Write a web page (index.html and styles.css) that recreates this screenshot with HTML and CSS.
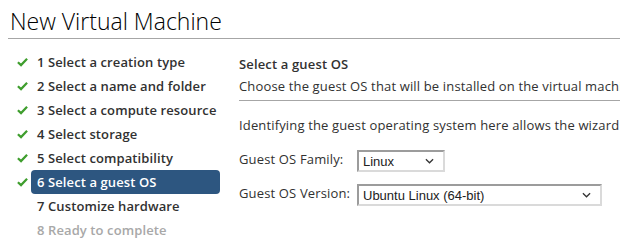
FILE: index.html
```html
<!doctype html>
<html>
  <head>
    <link rel="stylesheet" href="styles.css">
    <title>New Virtual Machine</title>
  </head>
  <body>
    <div id="page-wrapper">
      <h1 class="title">New Virtual Machine</h1>
      <div class="wizard">
        <ul class="steps">
          <li class="step done"><svg class="check" viewBox="0 0 12 10"><path d="M1 5.2 L4.4 8.4 L11 1.4"/></svg><span class="step-label">1 Select a creation type</span></li>
          <li class="step done"><svg class="check" viewBox="0 0 12 10"><path d="M1 5.2 L4.4 8.4 L11 1.4"/></svg><span class="step-label">2 Select a name and folder</span></li>
          <li class="step done"><svg class="check" viewBox="0 0 12 10"><path d="M1 5.2 L4.4 8.4 L11 1.4"/></svg><span class="step-label">3 Select a compute resource</span></li>
          <li class="step done"><svg class="check" viewBox="0 0 12 10"><path d="M1 5.2 L4.4 8.4 L11 1.4"/></svg><span class="step-label">4 Select storage</span></li>
          <li class="step done"><svg class="check" viewBox="0 0 12 10"><path d="M1 5.2 L4.4 8.4 L11 1.4"/></svg><span class="step-label">5 Select compatibility</span></li>
          <li class="step done active"><svg class="check" viewBox="0 0 12 10"><path d="M1 5.2 L4.4 8.4 L11 1.4"/></svg><span class="step-label">6 Select a guest OS</span></li>
          <li class="step"><span class="check"></span><span class="step-label">7 Customize hardware</span></li>
          <li class="step disabled"><span class="check"></span><span class="step-label">8 Ready to complete</span></li>
        </ul>
        <div class="content">
          <div class="content-header">
            <div class="content-title">Select a guest OS</div>
            <div class="content-desc">Choose the guest OS that will be installed on the virtual machine</div>
          </div>
          <p class="intro">Identifying the guest operating system here allows the wizard to provide the appropriate defaults for the operating system installation.</p>
          <div class="form">
            <span class="form-label">Guest OS Family:</span>
            <div class="select small"><span>Linux</span><svg class="chevron" viewBox="0 0 10 6"><path d="M1 1 L5 5 L9 1"/></svg></div>
            <span class="form-label">Guest OS Version:</span>
            <div class="select wide"><span>Ubuntu Linux (64-bit)</span><svg class="chevron" viewBox="0 0 10 6"><path d="M1 1 L5 5 L9 1"/></svg></div>
          </div>
        </div>
      </div>
    </div>
  </body>
</html>
```

FILE: styles.css
```css
body {
  margin: 0;
  font-family: "Open Sans", sans-serif;
  color: #313131;
  background: white;
  overflow: hidden;
}

#page-wrapper {
  width: 620px;
  overflow: hidden;
}

.title {
  margin: 0 0 0 8px;
  padding: 7px 0 0 2px;
  height: 31px;
  font-weight: 300;
  font-size: 23px;
  line-height: 28px;
  color: #000;
  border-bottom: 1px solid #a6a6a6;
  white-space: nowrap;
}

.wizard {
  display: flex;
}

.steps {
  list-style: none;
  margin: 0;
  padding: 11px 0 0 0;
  width: 239px;
  flex-shrink: 0;
}

.step {
  display: flex;
  align-items: center;
  height: 24px;
  font-size: 13px;
  font-weight: 600;
  letter-spacing: 0.1px;
  white-space: nowrap;
}

.check {
  width: 11px;
  height: 10px;
  margin-left: 17px;
  flex-shrink: 0;
}

.check path {
  fill: none;
  stroke: #3f9e2e;
  stroke-width: 2.4;
}

.step-label {
  width: 177px;
  margin-left: 3px;
  padding: 0 6px;
  line-height: 24px;
  border-radius: 4px;
}

.active .step-label {
  background: #2d5680;
  color: white;
}

.disabled .step-label {
  color: #a8a8a8;
}

.content {
  flex: 1;
  min-width: 0;
  padding-top: 16px;
  font-size: 13px;
  letter-spacing: 0.15px;
  white-space: nowrap;
}

.content-header {
  padding-bottom: 5px;
  border-bottom: 1px solid #a6a6a6;
}

.content-title {
  font-weight: 600;
  line-height: 18px;
}

.content-desc {
  margin-top: 4px;
  line-height: 18px;
}

.intro {
  margin: 15px 0 16px 0;
  line-height: 18px;
}

.form {
  display: grid;
  grid-template-columns: 118px auto;
  row-gap: 12px;
  align-items: center;
  justify-items: start;
}

.form-label {
  line-height: 18px;
  align-self: start;
}

.select {
  display: flex;
  align-items: center;
  justify-content: space-between;
  box-sizing: border-box;
  height: 22px;
  padding: 0 9px 0 4px;
  border: 2px solid;
  border-color: #9c9c9c #dadada #dadada #9c9c9c;
  font-family: "Liberation Sans", Arial, sans-serif;
  font-size: 13px;
  letter-spacing: 0;
  color: #222;
  background: white;
}

.select.small {
  width: 88px;
}

.select.wide {
  width: 245px;
}

.chevron {
  width: 9px;
  height: 6px;
}

.chevron path {
  fill: none;
  stroke: #333;
  stroke-width: 1.4;
}
```
